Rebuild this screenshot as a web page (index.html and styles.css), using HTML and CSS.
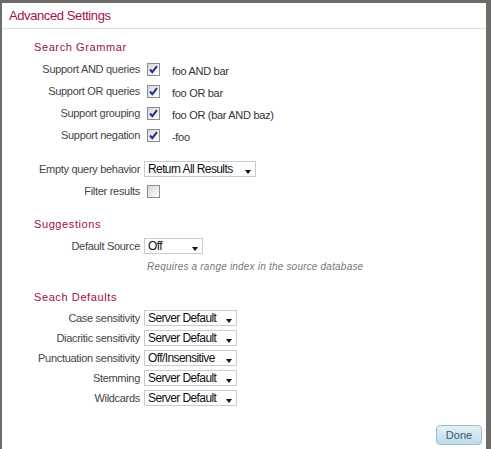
FILE: index.html
```html
<!DOCTYPE html>
<html>
<head>
<meta charset="utf-8">
<link rel="stylesheet" href="styles.css">
</head>
<body>
<div class="dialog">
  <div class="dialog-header"><span class="dialog-title">Advanced Settings</span></div>
  <div class="dialog-body">
    <div class="section-title first">Search Grammar</div>
    <div class="form-row cb-row">
      <span class="label">Support AND queries</span>
      <span class="checkbox checked"><svg width="13" height="13" viewBox="0 0 13 13"><path d="M3 6.5 L5.3 9.2 L10 3.2" fill="none" stroke="#23308a" stroke-width="2"/></svg></span>
      <span class="desc">foo AND bar</span>
    </div>
    <div class="form-row cb-row">
      <span class="label">Support OR queries</span>
      <span class="checkbox checked"><svg width="13" height="13" viewBox="0 0 13 13"><path d="M3 6.5 L5.3 9.2 L10 3.2" fill="none" stroke="#23308a" stroke-width="2"/></svg></span>
      <span class="desc">foo OR bar</span>
    </div>
    <div class="form-row cb-row">
      <span class="label">Support grouping</span>
      <span class="checkbox checked"><svg width="13" height="13" viewBox="0 0 13 13"><path d="M3 6.5 L5.3 9.2 L10 3.2" fill="none" stroke="#23308a" stroke-width="2"/></svg></span>
      <span class="desc">foo OR (bar AND baz)</span>
    </div>
    <div class="form-row cb-row">
      <span class="label">Support negation</span>
      <span class="checkbox checked"><svg width="13" height="13" viewBox="0 0 13 13"><path d="M3 6.5 L5.3 9.2 L10 3.2" fill="none" stroke="#23308a" stroke-width="2"/></svg></span>
      <span class="desc">-foo</span>
    </div>
    <div class="form-row cb-row gap-before">
      <span class="label">Empty query behavior</span>
      <span class="dropdown w-wide"><span class="dd-text">Return All Results</span><span class="dd-arrow"></span></span>
    </div>
    <div class="form-row cb-row">
      <span class="label">Filter results</span>
      <span class="checkbox"></span>
    </div>

    <div class="section-title">Suggestions</div>
    <div class="form-row cb-row">
      <span class="label">Default Source</span>
      <span class="dropdown w-small"><span class="dd-text">Off</span><span class="dd-arrow"></span></span>
    </div>
    <div class="note">Requires a range index in the source database</div>

    <div class="section-title">Seach Defaults</div>
    <div class="form-row sel-row">
      <span class="label">Case sensitivity</span>
      <span class="dropdown w-mid"><span class="dd-text">Server Default</span><span class="dd-arrow"></span></span>
    </div>
    <div class="form-row sel-row">
      <span class="label">Diacritic sensitivity</span>
      <span class="dropdown w-mid"><span class="dd-text">Server Default</span><span class="dd-arrow"></span></span>
    </div>
    <div class="form-row sel-row">
      <span class="label">Punctuation sensitivity</span>
      <span class="dropdown w-mid"><span class="dd-text">Off/Insensitive</span><span class="dd-arrow"></span></span>
    </div>
    <div class="form-row sel-row">
      <span class="label">Stemming</span>
      <span class="dropdown w-mid"><span class="dd-text">Server Default</span><span class="dd-arrow"></span></span>
    </div>
    <div class="form-row sel-row">
      <span class="label">Wildcards</span>
      <span class="dropdown w-mid"><span class="dd-text">Server Default</span><span class="dd-arrow"></span></span>
    </div>
  </div>
  <div class="dialog-footer">
    <button class="btn-done">Done</button>
  </div>
</div>
</body>
</html>
```

FILE: styles.css
```css
html, body {
  margin: 0;
  padding: 0;
}
body {
  background: #6c6c69;
  height: 449px;
  overflow: hidden;
  font-family: "Liberation Sans", Arial, sans-serif;
}
.dialog {
  margin: 3px 5px 0 2px;
  height: 446px;
  background: #ffffff;
  display: flex;
  flex-direction: column;
}
.dialog-header {
  height: 25px;
  border-bottom: 1px solid #dddddd;
  padding-left: 7px;
  display: flex;
  align-items: center;
}
.dialog-title {
  font-size: 13px;
  letter-spacing: -0.4px;
  color: #a3124f;
}
.dialog-body {
  flex: 1;
}
.section-title {
  padding-left: 32px;
  font-size: 11px;
  letter-spacing: 0.6px;
  line-height: 16px;
  color: #9c0d45;
  margin-top: 14px;
  margin-bottom: 3px;
}
.section-title.first {
  margin-top: 10px;
}
.form-row {
  display: flex;
  align-items: center;
}
.cb-row {
  height: 22px;
}
.sel-row {
  height: 20px;
}
.gap-before {
  margin-top: 12px;
}
.label {
  width: 142px;
  box-sizing: border-box;
  padding-right: 4px;
  text-align: right;
  font-size: 11px;
  letter-spacing: -0.3px;
  color: #444444;
  white-space: nowrap;
}
.checkbox {
  margin-left: 3px;
  width: 13px;
  height: 13px;
  box-sizing: border-box;
  border: 1px solid #8d8d8d;
  background: linear-gradient(135deg, #d6d6d6 0%, #f4f4f4 70%, #ffffff 100%);
  display: flex;
  align-items: center;
  justify-content: center;
}
.checkbox svg {
  display: block;
  flex: none;
  margin: -1px;
}
.desc {
  margin-left: 12px;
  margin-top: 3px;
  font-size: 11px;
  letter-spacing: -0.3px;
  color: #333333;
}
.dropdown {
  height: 16px;
  box-sizing: border-box;
  border: 1px solid #c9ccd1;
  background: #ffffff;
  display: flex;
  align-items: center;
  padding: 0 4px 0 3px;
}
.w-wide { width: 112px; }
.w-mid { width: 93px; }
.w-small { width: 59px; }
.dd-text {
  font-size: 12px;
  letter-spacing: -0.6px;
  color: #111111;
  white-space: nowrap;
  flex: 1;
}
.dd-arrow {
  width: 0;
  height: 0;
  border-left: 3.5px solid transparent;
  border-right: 3.5px solid transparent;
  border-top: 4px solid #111111;
  margin-top: 5px;
}
.note {
  height: 18px;
  display: flex;
  align-items: center;
  padding-left: 145px;
  font-size: 10px;
  font-style: italic;
  letter-spacing: 0.2px;
  color: #777777;
}
.dialog-footer {
  display: flex;
  justify-content: flex-end;
  padding: 0 4px 4px 0;
}
.btn-done {
  width: 46px;
  height: 20px;
  box-sizing: border-box;
  border: 1px solid #9cc0cf;
  border-radius: 4px;
  background: linear-gradient(#e4f2f7, #bcdbe7);
  font-family: "Liberation Sans", Arial, sans-serif;
  font-size: 11px;
  color: #38566b;
  padding: 0;
}
```
